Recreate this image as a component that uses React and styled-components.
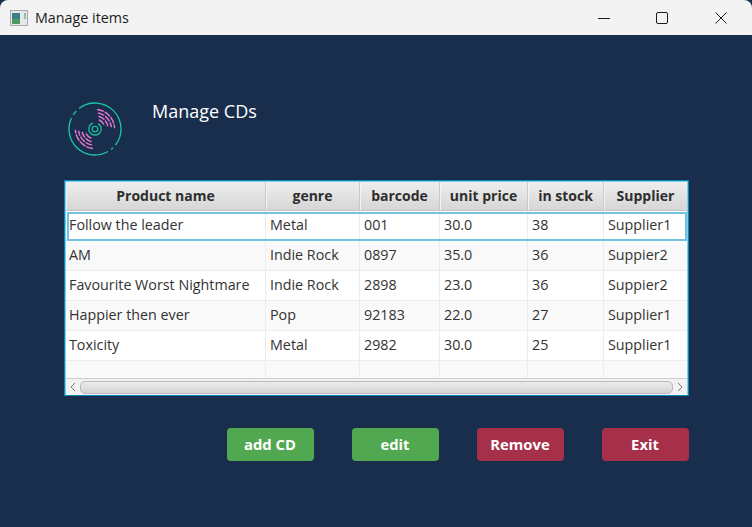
import React from "react";
import styled, { createGlobalStyle } from "styled-components";

const GlobalStyle = createGlobalStyle`
  html, body {
    margin: 0;
    padding: 0;
    background: #192e4c;
  }
  * {
    box-sizing: border-box;
  }
`;

const COLUMNS = "200px 94px 80px 88px 76px 1fr";

const Window = styled.div`
  width: 752px;
  height: 527px;
  display: flex;
  flex-direction: column;
  overflow: hidden;
  background: #192e4c;
  font-family: "Open Sans", "Noto Sans", sans-serif;
`;

const TitleBar = styled.div`
  height: 35px;
  flex: none;
  display: flex;
  align-items: center;
  padding: 0 2px 0 10px;
  background: #f3f3f3;
  border-radius: 8px 8px 0 0;
  color: #1c1c1c;
  font-size: 14.3px;
`;

const TitleText = styled.span`
  margin-left: 7px;
  flex: 1;
`;

const WindowButton = styled.div`
  width: 58.5px;
  height: 35px;
  display: flex;
  align-items: center;
  justify-content: center;
`;

const Content = styled.div`
  flex: 1;
  display: flex;
  flex-direction: column;
  padding: 66px 63px 0 64px;
`;

const Header = styled.div`
  display: flex;
  height: 79px;
  padding-left: 3px;
`;

const Heading = styled.h1`
  margin: -1px 0 0 29px;
  height: 22px;
  line-height: 22px;
  color: #ffffff;
  font-size: 18px;
  font-weight: 400;
`;

const TableFrame = styled.div`
  height: 216px;
  display: flex;
  flex-direction: column;
  background: #ffffff;
  border: 1px solid #0a86b6;
  box-shadow: inset 0 0 0 1px #7fd0ea;
  padding: 1px;
`;

const Row = styled.div`
  display: grid;
  grid-template-columns: ${COLUMNS};
  flex: none;
  height: ${(p) => p.$height || 30}px;
  background: ${(p) => (p.$odd ? "#f9f9f9" : "#ffffff")};
  border-bottom: ${(p) => (p.$last ? "none" : "1px solid #ececec")};
  position: relative;
`;

const HeaderRow = styled(Row)`
  height: 29px;
  background: linear-gradient(#eeeeee, #d6d6d6);
  border-bottom: 1px solid #c4c4c4;
`;

const HeaderCell = styled.div`
  display: flex;
  align-items: center;
  justify-content: center;
  padding-bottom: 2px;
  color: #2e2e2e;
  font-size: 14px;
  font-weight: 700;
  border-right: 1px solid #c9c9c9;
  box-shadow: inset 1px 0 0 #f4f4f4;

  &:last-child {
    border-right: none;
  }
`;

const Cell = styled.div`
  display: flex;
  align-items: center;
  padding: 0 0 3px 4px;
  color: #333333;
  font-size: 14.3px;
  border-right: 1px solid #ececec;
  white-space: nowrap;

  &:first-child {
    padding-left: 3px;
  }

  &:last-child {
    border-right: none;
  }
`;

const FocusRing = styled.div`
  position: absolute;
  inset: 1px 0 -1px 1px;
  border: 2px solid #72c3e0;
  pointer-events: none;
`;

const ScrollBar = styled.div`
  height: 17px;
  flex: none;
  display: flex;
  align-items: center;
  background: #f2f2f2;
  border-top: 1px solid #cfcfcf;
`;

const ScrollArrow = styled.div`
  width: 14px;
  display: flex;
  justify-content: center;
  align-items: center;
  flex: none;
`;

const ScrollThumb = styled.div`
  flex: 1;
  height: 13px;
  border: 1px solid #b9b9b9;
  border-radius: 5px;
  background: linear-gradient(#ececec, #d4d4d4);
`;

const ButtonBar = styled.div`
  display: flex;
  justify-content: flex-end;
  gap: 38px;
  margin-top: 32px;
`;

const ActionButton = styled.button`
  width: 87px;
  height: 33px;
  padding: 0 1px 2px 0;
  border: none;
  border-radius: 4px;
  background: ${(p) => (p.$danger ? "#a62f49" : "#52a850")};
  color: #ffffff;
  font-family: inherit;
  font-size: 14.8px;
  font-weight: 700;
`;

const rows = [
  ["Follow the leader", "Metal", "001", "30.0", "38", "Supplier1"],
  ["AM", "Indie Rock", "0897", "35.0", "36", "Suppier2"],
  ["Favourite Worst Nightmare", "Indie Rock", "2898", "23.0", "36", "Suppier2"],
  ["Happier then ever", "Pop", "92183", "22.0", "27", "Supplier1"],
  ["Toxicity", "Metal", "2982", "30.0", "25", "Supplier1"],
];

const headers = ["Product name", "genre", "barcode", "unit price", "in stock", "Supplier"];

function arc(r, from, to) {
  const rad = (d) => (d * Math.PI) / 180;
  const x1 = 28 + r * Math.cos(rad(from));
  const y1 = 28 + r * Math.sin(rad(from));
  const x2 = 28 + r * Math.cos(rad(to));
  const y2 = 28 + r * Math.sin(rad(to));
  const large = to - from > 180 ? 1 : 0;
  return `M${x1.toFixed(2)} ${y1.toFixed(2)}A${r} ${r} 0 ${large} 1 ${x2.toFixed(2)} ${y2.toFixed(2)}`;
}

function DiscIcon() {
  const grooves = [
    [10, -68, -20],
    [13.2, -75, -12],
    [16.4, -80, -6],
    [19.6, -84, -2],
  ];
  return (
    <svg width="56" height="56" viewBox="0 0 56 56" fill="none">
      <g stroke="#1cc9a6" strokeWidth="1.3">
        <path d={arc(26, -128, 38)} />
        <path d={arc(26, 46, 52)} />
        <path d={arc(26, 60, 205)} />
        <path d={arc(26, 213, 224)} />
      </g>
      <path d={arc(6.2, -60, 250)} stroke="#1cc9a6" strokeWidth="1.2" />
      <circle cx="28" cy="28" r="2.8" stroke="#1cc9a6" strokeWidth="1.1" />
      {grooves.map(([r, from, to]) => (
        <g key={r} stroke="#ea78d2" strokeWidth="1.4" strokeDasharray="7 1">
          <path d={arc(r, from, to)} />
          <path d={arc(r, from + 180, to + 180)} />
        </g>
      ))}
    </svg>
  );
}

function AppIcon() {
  return (
    <svg width="18" height="16" viewBox="0 0 18 16">
      <rect x="0.5" y="0.5" width="17" height="15" fill="#e4e8e8" stroke="#a9a9a9" />
      <rect x="2" y="3" width="8" height="11" fill="#3c7f86" />
      <rect x="2" y="9" width="8" height="5" fill="#4f9a62" />
      <rect x="14" y="3" width="2" height="6" fill="#8fc0a8" />
    </svg>
  );
}

export default function App() {
  return (
    <Window>
      <GlobalStyle />
      <TitleBar>
        <AppIcon />
        <TitleText>Manage items</TitleText>
        <WindowButton>
          <svg width="12" height="12" viewBox="0 0 12 12">
            <path d="M0 6.5h12" stroke="#1c1c1c" strokeWidth="1" />
          </svg>
        </WindowButton>
        <WindowButton>
          <svg width="12" height="12" viewBox="0 0 12 12" fill="none">
            <rect x="0.5" y="0.5" width="11" height="11" rx="1.5" stroke="#1c1c1c" />
          </svg>
        </WindowButton>
        <WindowButton>
          <svg width="12" height="12" viewBox="0 0 12 12">
            <path d="M0.5 0.5l11 11M11.5 0.5l-11 11" stroke="#1c1c1c" strokeWidth="1" />
          </svg>
        </WindowButton>
      </TitleBar>
      <Content>
        <Header>
          <DiscIcon />
          <Heading>Manage CDs</Heading>
        </Header>
        <TableFrame>
          <HeaderRow>
            {headers.map((h) => (
              <HeaderCell key={h}>{h}</HeaderCell>
            ))}
          </HeaderRow>
          {rows.map((row, i) => (
            <Row key={row[0]} $odd={i % 2 === 1}>
              {row.map((value, j) => (
                <Cell key={j}>{value}</Cell>
              ))}
              {i === 0 && <FocusRing />}
            </Row>
          ))}
          <Row $odd $last $height={17}>
            {headers.map((h) => (
              <Cell key={h} />
            ))}
          </Row>
          <ScrollBar>
            <ScrollArrow>
              <svg width="6" height="10" viewBox="0 0 6 10" fill="none">
                <path d="M5 1L1 5l4 4" stroke="#777777" />
              </svg>
            </ScrollArrow>
            <ScrollThumb />
            <ScrollArrow>
              <svg width="6" height="10" viewBox="0 0 6 10" fill="none">
                <path d="M1 1l4 4-4 4" stroke="#777777" />
              </svg>
            </ScrollArrow>
          </ScrollBar>
        </TableFrame>
        <ButtonBar>
          <ActionButton>add CD</ActionButton>
          <ActionButton>edit</ActionButton>
          <ActionButton $danger>Remove</ActionButton>
          <ActionButton $danger>Exit</ActionButton>
        </ButtonBar>
      </Content>
    </Window>
  );
}
